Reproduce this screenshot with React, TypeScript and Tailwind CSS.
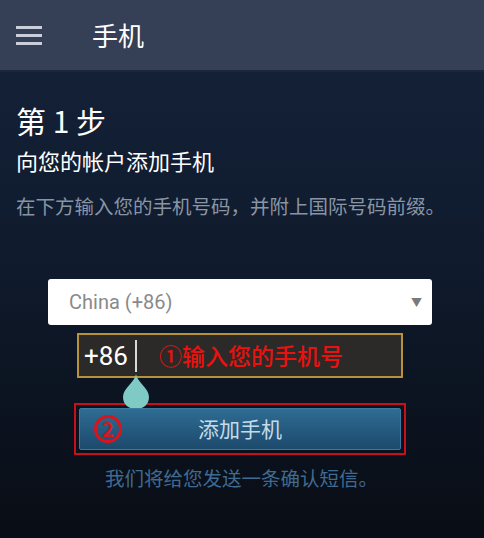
const FONT = '"Noto Sans CJK SC", "Noto Sans", Roboto, sans-serif';

function Hamburger() {
  return (
    <div className="flex w-[26px] flex-col gap-[5px]">
      <span className="block h-[3px] w-full bg-[#c9ceda]" />
      <span className="block h-[3px] w-full bg-[#c9ceda]" />
      <span className="block h-[3px] w-full bg-[#c9ceda]" />
    </div>
  );
}

function Handle() {
  return (
    <svg width="28" height="36" viewBox="0 0 28 36" className="absolute left-[-13px] top-[34px]">
      <path d="M14 0 C15 8 27 14 27 23 C27 31 21 35 14 35 C7 35 1 31 1 23 C1 14 13 8 14 0 Z" fill="#7fcac5" />
    </svg>
  );
}

export default function App() {
  return (
    <div
      className="flex h-[538px] w-[484px] flex-col overflow-hidden bg-gradient-to-b from-[#15233b] via-[#0f1a2c] to-[#090d15]"
      style={{ fontFamily: FONT }}
    >
      {/* header */}
      <div className="flex h-[72px] shrink-0 items-center border-b-[2px] border-[#1c2637] bg-[#353f56] pl-[16px]">
        <Hamburger />
        <span className="ml-[50px] text-[26px] leading-none text-white">手机</span>
      </div>

      <div className="flex flex-col px-[16px] pt-[30px]">
        <h1 className="text-[30px] leading-[36px] text-white">第 1 步</h1>
        <h2 className="mt-[7px] text-[22px] leading-[30px] text-white">向您的帐户添加手机</h2>
        <p className="mt-[18px] whitespace-nowrap text-[19.5px] leading-[26px] text-[#8995a4]">
          在下方输入您的手机号码，并附上国际号码前缀。
        </p>
      </div>

      <div className="mt-[60px] flex flex-col items-start">
        {/* country select */}
        <div className="ml-[48px] flex h-[46px] w-[384px] items-center justify-between rounded-[3px] bg-white pl-[21px] pr-[10px]">
          <span className="text-[20px] text-[#8a8a8a]" style={{ fontFamily: 'Roboto, sans-serif' }}>
            China (+86)
          </span>
          <span className="text-[11px] text-[#7a7a7a]">▼</span>
        </div>

        {/* phone input */}
        <div className="ml-[77px] mt-[8px] flex h-[45px] w-[326px] items-center border-[2px] border-[#b8923a] bg-[#2b2a28] pl-[5px]">
          <span className="text-[26px] leading-none text-white" style={{ fontFamily: 'Roboto, sans-serif' }}>
            +86
          </span>
          <span className="relative ml-[7px] block h-[32px] w-[2px] bg-[#d8d8d8]">
            <Handle />
          </span>
          <span className="ml-[22px] text-[23px] font-medium leading-none text-[#e8120f]">①输入您的手机号</span>
        </div>

        {/* button */}
        <div className="ml-[74px] mt-[25px] border-[2px] border-[#c8101a] p-[3px]">
          <button className="relative flex h-[42px] w-[322px] items-center justify-center rounded-[2px] border border-[#3d7aa0] bg-gradient-to-b from-[#2f6c93] to-[#1c4a6c] text-[21px] text-[#c6dbe9]">
            <span className="absolute left-[14px] top-[6px] flex h-[28px] w-[28px] items-center justify-center rounded-full border-[3px] border-[#d8141c] text-[20px] font-bold leading-none text-[#d8141c]">
              2
            </span>
            添加手机
          </button>
        </div>

        <p className="ml-[105px] mt-[11px] whitespace-nowrap text-[19.5px] leading-[24px] text-[#3f6b92]">
          我们将给您发送一条确认短信。
        </p>
      </div>
    </div>
  );
}
